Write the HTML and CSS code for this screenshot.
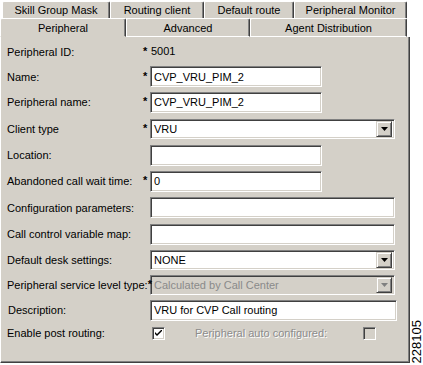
FILE: index.html
```html
<!DOCTYPE html>
<html lang="en">
<head>
<meta charset="UTF-8" />
<title>Peripheral</title>
<link rel="stylesheet" href="styles.css">
</head>
<body>
<div class="page">
  <div class="dialog">
    <div class="tab-row back">
      <div class="tab t-skill">Skill Group Mask</div>
      <div class="tab t-routing">Routing client</div>
      <div class="tab t-default">Default route</div>
      <div class="tab t-monitor">Peripheral Monitor</div>
    </div>
    <div class="tab-row front">
      <div class="tab t-periph active">Peripheral</div>
      <div class="tab t-adv">Advanced</div>
      <div class="tab t-agent">Agent Distribution</div>
    </div>

    <div class="panel">
      <div class="form">
        <label>Peripheral ID:</label>
        <span class="req">*</span>
        <span class="value">5001</span>

        <label>Name:</label>
        <span class="req">*</span>
        <input class="field short" type="text" value="CVP_VRU_PIM_2">

        <label>Peripheral name:</label>
        <span class="req">*</span>
        <input class="field short" type="text" value="CVP_VRU_PIM_2">

        <label>Client type</label>
        <span class="req">*</span>
        <div class="field select long">
          <span>VRU</span>
          <span class="drop"><svg width="7" height="4" viewBox="0 0 7 4"><polygon points="0,0 7,0 3.5,4" fill="#000"/></svg></span>
        </div>

        <label>Location:</label>
        <span></span>
        <input class="field short" type="text" value="">

        <label>Abandoned call wait time:</label>
        <span class="req">*</span>
        <input class="field short" type="text" value="0">

        <label>Configuration parameters:</label>
        <span></span>
        <input class="field long" type="text" value="">

        <label>Call control variable map:</label>
        <span></span>
        <input class="field long" type="text" value="">

        <label>Default desk settings:</label>
        <span></span>
        <div class="field select long">
          <span>NONE</span>
          <span class="drop"><svg width="7" height="4" viewBox="0 0 7 4"><polygon points="0,0 7,0 3.5,4" fill="#000"/></svg></span>
        </div>

        <label class="span2">Peripheral service level type:<span class="req-inline">*</span></label>
        <div class="field select long disabled">
          <span>Calculated by Call Center</span>
          <span class="drop"><svg width="7" height="4" viewBox="0 0 7 4"><polygon points="0,0 7,0 3.5,4" fill="#808080"/></svg></span>
        </div>

        <label class="indent">Description:</label>
        <span></span>
        <input class="field wide" type="text" value="VRU for CVP Call routing">

        <label>Enable post routing:</label>
        <span></span>
        <div class="check-row">
          <span class="check"><svg width="7" height="7" viewBox="0 0 7 7"><path d="M0 2 L0 4 L2 6 L7 1 L7 -1 L2 4 Z" fill="#000"/></svg></span>
          <span class="muted">Peripheral auto configured:</span>
          <span class="check off"></span>
        </div>
      </div>
    </div>
  </div>
  <div class="figno"><span>228105</span></div>
</div>
</body>
</html>
```

FILE: styles.css
```css
* {
  box-sizing: border-box;
}
body {
  margin: 0;
  background: #fff;
  font-family: "Liberation Sans", Arial, sans-serif;
  font-size: 11px;
  color: #000;
}
.page {
  display: flex;
  width: 423px;
  height: 365px;
}
.dialog {
  width: 410px;
  height: 363px;
  display: flex;
  flex-direction: column;
}

/* tabs */
.tab-row {
  display: flex;
}
.tab-row.back {
  height: 18px;
  padding: 1px 0 0 2px;
}
.tab-row.front {
  height: 19px;
}
.tab {
  background: #d4d0c8;
  border-top: 1px solid #fff;
  border-left: 1px solid #fff;
  border-right: 1px solid #404040;
  box-shadow: inset -1px 0 #808080;
  border-radius: 2px 2px 0 0;
  display: flex;
  align-items: center;
  justify-content: center;
  white-space: nowrap;
}
.front .tab {
  border-bottom: 1px solid #fff;
}
.front .tab.active {
  border-bottom-color: #d4d0c8;
}
.t-skill { width: 108px; }
.t-routing { width: 94px; }
.t-default { width: 90px; }
.t-monitor { width: 113px; }
.t-periph { width: 126px; }
.t-adv { width: 124px; }
.t-agent { width: 157px; }

/* panel */
.panel {
  flex: 1;
  background: #d4d0c8;
  border-left: 1px solid #fff;
  border-right: 1px solid #404040;
  border-bottom: 1px solid #404040;
  box-shadow: inset -1px -1px #808080;
  padding: 3px 0 0 6px;
}
.form {
  display: grid;
  grid-template-columns: 136px 7px auto;
  grid-template-rows: 24px 25px 26px 27px 26px 26px 27px 26px 25px 26px 24px 22px;
  align-items: center;
}
.form label {
  white-space: nowrap;
}
.form label.span2 {
  grid-column: span 2;
}
.form label.indent {
  padding-left: 1px;
}
.req, .req-inline {
  font-weight: bold;
  font-size: 11px;
  position: relative;
  top: -1px;
}
.value {
  padding-left: 1px;
  position: relative;
  top: -1px;
}

/* fields */
.field {
  height: 21px;
  margin: 0;
  background: #fff;
  border: 1px solid;
  border-color: #808080 #fff #fff #808080;
  box-shadow: inset 1px 1px #404040, inset -1px -1px #d4d0c8;
  padding: 0 3px;
  font: inherit;
  color: #000;
  outline: none;
}
.short { width: 172px; }
.long { width: 245px; }
.wide { width: 247px; }

.select {
  height: 20px;
  display: flex;
  align-items: center;
  justify-content: space-between;
  padding: 2px 2px 2px 3px;
}
.drop {
  width: 16px;
  height: 16px;
  background: #d4d0c8;
  border: 1px solid;
  border-color: #d4d0c8 #404040 #404040 #d4d0c8;
  box-shadow: inset 1px 1px #fff, inset -1px -1px #808080;
  display: flex;
  align-items: center;
  justify-content: center;
}
.select.disabled {
  background: #d4d0c8;
  color: #8a8a8a;
}

/* checkboxes */
.check-row {
  display: flex;
  align-items: center;
}
.check {
  width: 13px;
  height: 13px;
  margin-left: 2px;
  background: #fff;
  border: 1px solid;
  border-color: #808080 #fff #fff #808080;
  box-shadow: inset 1px 1px #404040, inset -1px -1px #d4d0c8;
  display: flex;
  align-items: center;
  justify-content: center;
}
.check.off {
  background: #d4d0c8;
  margin-left: 36px;
}
.muted {
  margin-left: 30px;
  color: #8c8c8c;
  text-shadow: 1px 1px #fff;
}

/* figure number */
.figno {
  width: 13px;
  display: flex;
  align-items: flex-end;
  justify-content: center;
  padding-bottom: 2px;
}
.figno span {
  writing-mode: vertical-rl;
  transform: rotate(180deg);
  font-size: 13px;
  line-height: 13px;
}
```
